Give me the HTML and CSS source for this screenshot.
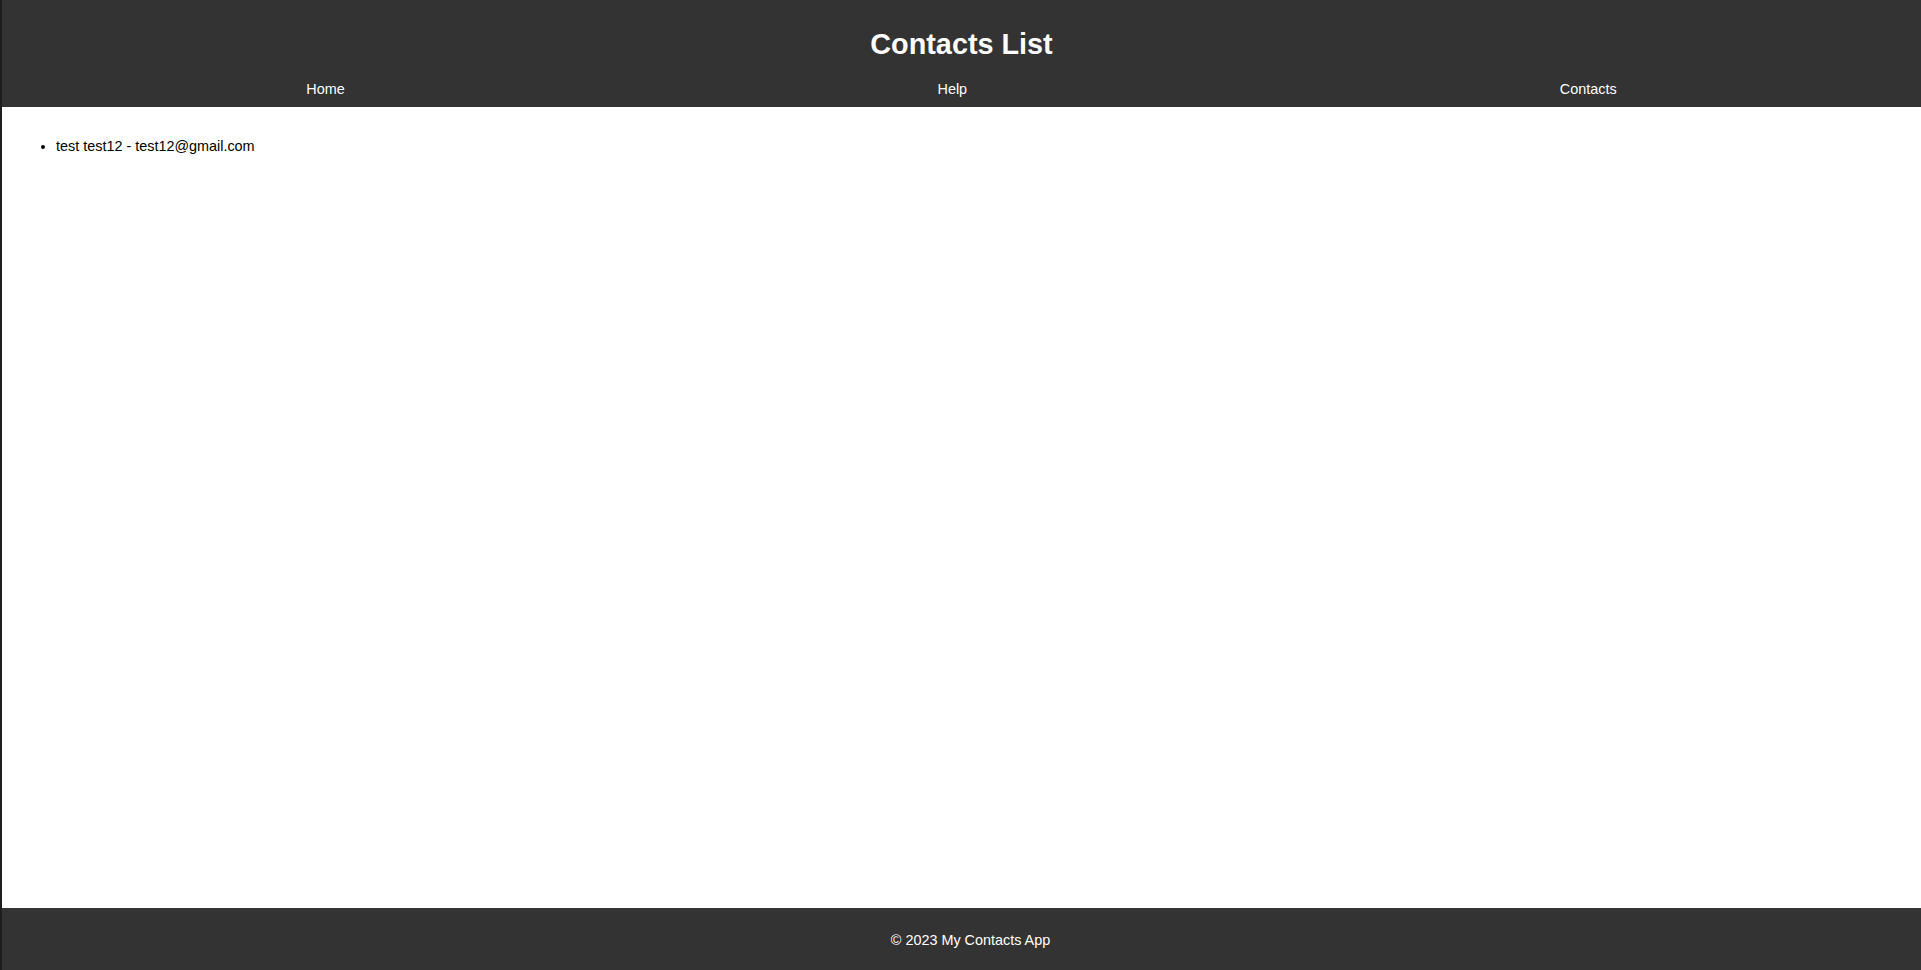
FILE: index.html
```html
<!DOCTYPE html>
<html lang="en">
<head>
<meta charset="utf-8">
<title>Contacts List</title>
<link rel="stylesheet" href="styles.css">
</head>
<body>
  <header class="site-header">
    <h1 class="site-title">Contacts List</h1>
    <nav class="site-nav">
      <ul class="nav-list">
        <li><a class="nav-link" href="#">Home</a></li>
        <li><a class="nav-link" href="#">Help</a></li>
        <li><a class="nav-link" href="#">Contacts</a></li>
      </ul>
    </nav>
  </header>
  <main class="content">
    <ul class="contact-list">
      <li>test test12 - test12@gmail.com</li>
    </ul>
  </main>
  <footer class="site-footer">
    <p class="footer-text">© 2023 My Contacts App</p>
  </footer>
</body>
</html>
```

FILE: styles.css
```css
html, body {
  margin: 0;
  padding: 0;
}

body {
  font-family: "Liberation Sans", Arial, sans-serif;
  font-size: 14.4px;
  color: #000;
  background: #fff;
  border-left: 2px solid #1e1e1e;
  min-height: 100vh;
  box-sizing: border-box;
  display: flex;
  flex-direction: column;
}

.site-header {
  background: #333;
  color: #fff;
  padding: 28px 8px 10px;
  text-align: center;
}

.site-title {
  margin: 0 0 20px;
  font-size: 28.8px;
  font-weight: bold;
  line-height: normal;
}

.nav-list {
  list-style: none;
  margin: 0;
  padding: 0;
  display: flex;
  justify-content: space-around;
}

.nav-link {
  color: #fff;
  text-decoration: none;
}

.content {
  flex: 1;
  padding: 16.5px 14px 0;
}

.contact-list {
  margin: 14.4px 0;
  padding-left: 40px;
}

.site-footer {
  background: #333;
  color: #fff;
  text-align: center;
  padding: 24px 0 22px 18px;
}

.footer-text {
  margin: 0;
}
```
